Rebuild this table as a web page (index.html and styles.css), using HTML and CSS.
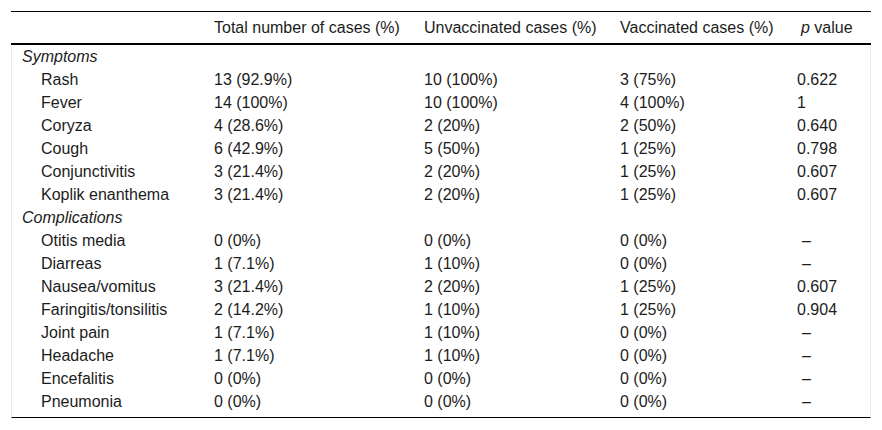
FILE: index.html
```html
<!DOCTYPE html>
<html lang="en">
<head>
<meta charset="utf-8">
<title>Measles cases</title>
<link rel="stylesheet" href="styles.css">
</head>
<body>
<div class="wrap">
<table class="data">
<colgroup>
<col class="c1"><col class="c2"><col class="c3"><col class="c4"><col class="c5">
</colgroup>
<thead>
<tr>
<th></th>
<th>Total number of cases (%)</th>
<th>Unvaccinated cases (%)</th>
<th>Vaccinated cases (%)</th>
<th class="pv"><i>p</i> value</th>
</tr>
</thead>
<tbody>
<tr class="grp"><td><i>Symptoms</i></td><td></td><td></td><td></td><td></td></tr>
<tr><td>Rash</td><td>13 (92.9%)</td><td>10 (100%)</td><td>3 (75%)</td><td>0.622</td></tr>
<tr><td>Fever</td><td>14 (100%)</td><td>10 (100%)</td><td>4 (100%)</td><td>1</td></tr>
<tr><td>Coryza</td><td>4 (28.6%)</td><td>2 (20%)</td><td>2 (50%)</td><td>0.640</td></tr>
<tr><td>Cough</td><td>6 (42.9%)</td><td>5 (50%)</td><td>1 (25%)</td><td>0.798</td></tr>
<tr><td>Conjunctivitis</td><td>3 (21.4%)</td><td>2 (20%)</td><td>1 (25%)</td><td>0.607</td></tr>
<tr><td>Koplik enanthema</td><td>3 (21.4%)</td><td>2 (20%)</td><td>1 (25%)</td><td>0.607</td></tr>
<tr class="grp"><td><i>Complications</i></td><td></td><td></td><td></td><td></td></tr>
<tr><td>Otitis media</td><td>0 (0%)</td><td>0 (0%)</td><td>0 (0%)</td><td class="na">–</td></tr>
<tr><td>Diarreas</td><td>1 (7.1%)</td><td>1 (10%)</td><td>0 (0%)</td><td class="na">–</td></tr>
<tr><td>Nausea/vomitus</td><td>3 (21.4%)</td><td>2 (20%)</td><td>1 (25%)</td><td>0.607</td></tr>
<tr><td>Faringitis/tonsilitis</td><td>2 (14.2%)</td><td>1 (10%)</td><td>1 (25%)</td><td>0.904</td></tr>
<tr><td>Joint pain</td><td>1 (7.1%)</td><td>1 (10%)</td><td>0 (0%)</td><td class="na">–</td></tr>
<tr><td>Headache</td><td>1 (7.1%)</td><td>1 (10%)</td><td>0 (0%)</td><td class="na">–</td></tr>
<tr><td>Encefalitis</td><td>0 (0%)</td><td>0 (0%)</td><td>0 (0%)</td><td class="na">–</td></tr>
<tr class="last"><td>Pneumonia</td><td>0 (0%)</td><td>0 (0%)</td><td>0 (0%)</td><td class="na">–</td></tr>
</tbody>
</table>
</div>
</body>
</html>
```

FILE: styles.css
```css
html, body {
  margin: 0;
  padding: 0;
  background: #ffffff;
}

.wrap {
  padding: 11px 0 0 11px;
}

.data {
  width: 860px;
  table-layout: fixed;
  border-collapse: separate;
  border-spacing: 0;
  font-family: "Liberation Sans", Arial, sans-serif;
  font-size: 16px;
  color: #1c1c1c;
}

.c1 { width: 194px; }
.c2 { width: 210px; }
.c3 { width: 196px; }
.c4 { width: 177px; }
.c5 { width: 83px; }

.data th {
  font-weight: normal;
  text-align: left;
  height: 31px;
  padding: 0 0 0 9px;
  border-top: 1px solid #000;
  border-bottom: 2px solid #000;
  white-space: nowrap;
}

.data th.pv {
  padding-left: 13px;
}

.data td {
  height: 23px;
  padding: 0 0 0 9px;
  white-space: nowrap;
  line-height: 23px;
}

.data td:first-child {
  padding-left: 29px;
  border-left: 1px solid #ececec;
}

.data td:last-child {
  border-right: 1px solid #ececec;
}

.data td.na {
  padding-left: 14px;
}

.data tr.grp td:first-child {
  padding-left: 10px;
}

.data tr.last td {
  padding-bottom: 4px;
  border-bottom: 1px solid #000;
  vertical-align: top;
}
```
